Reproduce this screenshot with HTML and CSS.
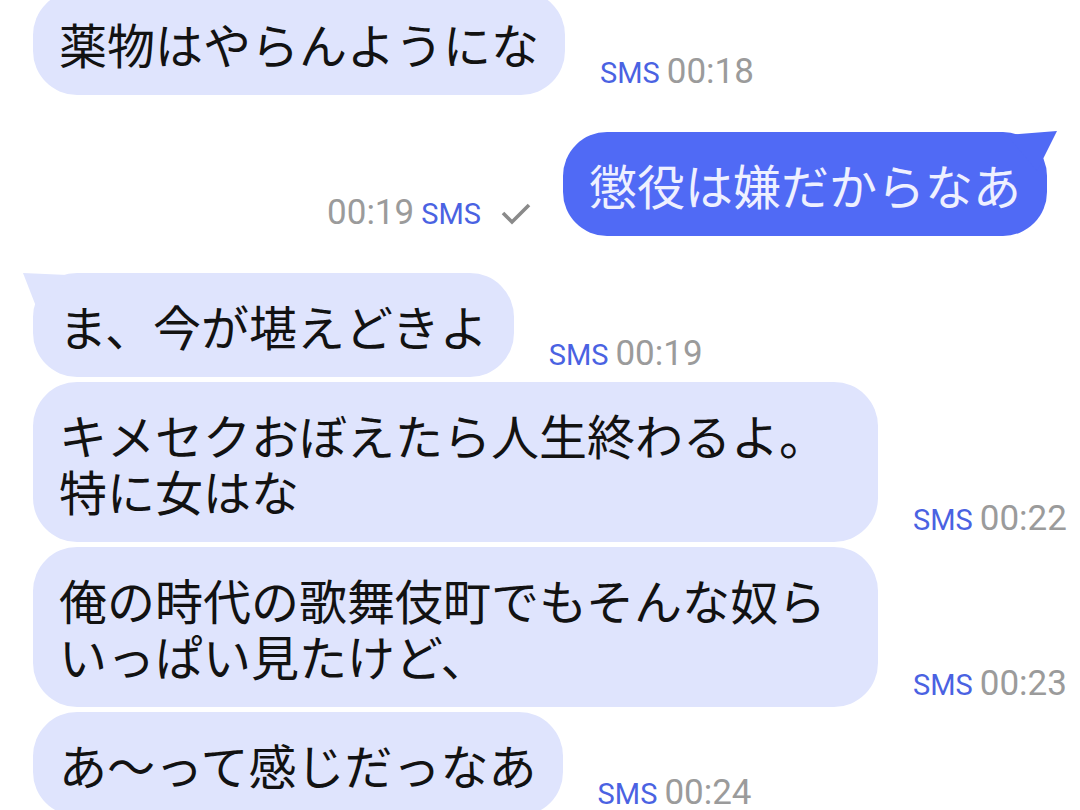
FILE: index.html
```html
<!DOCTYPE html>
<html lang="ja">
<head>
  <meta charset="UTF-8">
  <title>SMS</title>
  <link rel="stylesheet" href="styles.css">
</head>
<body>

<div class="chat">
  <!-- 受信 -->
  <div class="row recv gap-big">
    <div class="bubble">薬物はやらんようにな</div>
    <div class="meta"><span class="sms">SMS</span><span class="time">00:18</span></div>
  </div>

  <!-- 送信 -->
  <div class="row sent gap-big">
    <div class="meta"><span class="time">00:19</span><span class="sms">SMS</span>
      <svg class="check" width="32" height="24" viewBox="0 0 32 24"><polyline points="3,12 12,21 29,4" fill="none" stroke="#8a8a8a" stroke-width="3.6"/></svg>
    </div>
    <div class="bubble tail">懲役は嫌だからなあ</div>
  </div>

  <div class="row recv">
    <div class="bubble tail">ま、今が堪えどきよ</div>
    <div class="meta"><span class="sms">SMS</span><span class="time">00:19</span></div>
  </div>
  <div class="row recv">
    <div class="bubble">キメセクおぼえたら人生終わるよ。特に女はな</div>
    <div class="meta"><span class="sms">SMS</span><span class="time">00:22</span></div>
  </div>
  <div class="row recv">
    <div class="bubble">俺の時代の歌舞伎町でもそんな奴らいっぱい見たけど、</div>
    <div class="meta"><span class="sms">SMS</span><span class="time">00:23</span></div>
  </div>
  <div class="row recv">
    <div class="bubble">あ〜って感じだっなあ</div>
    <div class="meta"><span class="sms">SMS</span><span class="time">00:24</span></div>
  </div>
</div>

</body>
</html>
```

FILE: styles.css
```css
* {
  margin: 0;
  padding: 0;
  box-sizing: border-box;
}
body {
  background: #fff;
  overflow: hidden;
}
.chat {
  margin-top: -9px;
  padding: 0 33px;
  display: flex;
  flex-direction: column;
  gap: 5px;
}
.row {
  display: flex;
  align-items: flex-end;
}
.row.gap-big {
  margin-bottom: 32px;
}
.sent {
  justify-content: flex-end;
}
.bubble {
  position: relative;
  max-width: 845px;
  padding: 24px 26px;
  border-radius: 44px;
  background: #dfe4fd;
  color: #121212;
  font-family: "Noto Sans CJK JP", sans-serif;
  font-size: 48px;
  line-height: 56px;
  flex-shrink: 0;
}
.sent .bubble {
  background: #506af5;
  color: #eef0ff;
}
/* 吹き出しのしっぽ */
.recv .tail::before {
  content: "";
  position: absolute;
  left: -10px;
  top: 0;
  width: 50px;
  height: 36px;
  background: #dfe4fd;
  clip-path: polygon(0 0, 100% 6%, 28% 100%);
}
.sent .tail::before {
  content: "";
  position: absolute;
  right: -10px;
  top: -1px;
  width: 50px;
  height: 40px;
  background: #506af5;
  clip-path: polygon(100% 0, 0 10%, 60% 100%);
}
.meta {
  display: flex;
  align-items: baseline;
  gap: 7px;
  padding-bottom: 6px;
  font-family: Roboto, "Liberation Sans", sans-serif;
  line-height: 1;
  white-space: nowrap;
}
.recv .meta {
  margin-left: 35px;
}
.sent .meta {
  margin-right: 31px;
}
.sms {
  color: #4a62e2;
  font-size: 29px;
}
.time {
  color: #9b9b9b;
  font-size: 35px;
}
.check {
  margin-left: 12px;
  align-self: center;
}
```
